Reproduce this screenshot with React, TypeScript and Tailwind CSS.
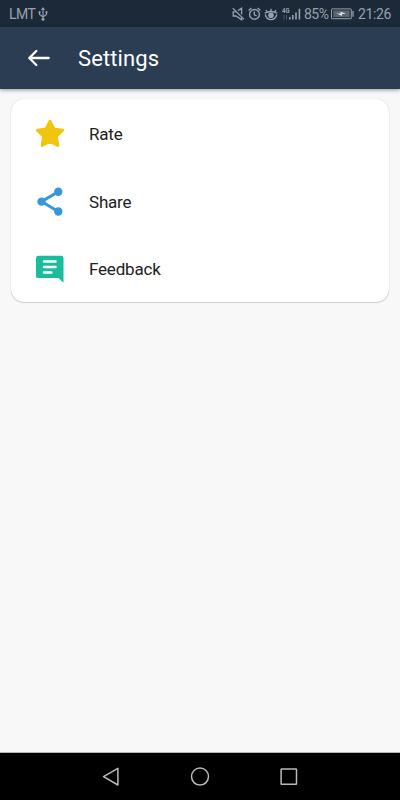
import type { ReactNode } from "react"

interface SettingsItem {
  label: string
  icon: ReactNode
}

function StarIcon() {
  return (
    <svg width="30" height="30" viewBox="0 0 30 30" fill="#f1c40f" stroke="#f1c40f" strokeWidth="3" strokeLinejoin="round">
      <path d="M15 2.2 L18.9 10 L27.6 11.3 L21.3 17.5 L22.8 26.4 L15 22.5 L7.2 26.4 L8.7 17.5 L2.4 11.3 L11.1 10 Z" />
    </svg>
  )
}

function ShareIcon() {
  return (
    <svg width="30" height="30" viewBox="0 0 30 30" fill="#3498db">
      <path d="M23.3 4.8 L6.5 14.6 L23.3 24.5" fill="none" stroke="#3498db" strokeWidth="3" />
      <circle cx="23.3" cy="4.8" r="4.2" />
      <circle cx="6.5" cy="14.6" r="4.2" />
      <circle cx="23.3" cy="24.5" r="4.2" />
    </svg>
  )
}

function FeedbackIcon() {
  return (
    <svg width="30" height="30" viewBox="0 0 30 30">
      <path d="M3.2 1.8 H26.3 A2.2 2.2 0 0 1 28.5 4 V28.8 L23.5 24.1 H3.2 A2.2 2.2 0 0 1 1 21.9 V4 A2.2 2.2 0 0 1 3.2 1.8 Z" fill="#1abc9c" />
      <path d="M9 7.5 H20.5 M9 13 H20.5 M9 18.4 H16.4" stroke="#fff" strokeWidth="2.5" strokeLinecap="round" />
    </svg>
  )
}

const items: SettingsItem[] = [
  { label: "Rate", icon: <StarIcon /> },
  { label: "Share", icon: <ShareIcon /> },
  { label: "Feedback", icon: <FeedbackIcon /> },
]

function UsbIcon() {
  return (
    <svg className="ml-[3px]" width="10" height="14" viewBox="0 0 10 14" fill="none" stroke="currentColor">
      <path d="M5 2 V12 M1.5 5.5 V7.5 L5 10 L8.5 7.5 V5.5" strokeWidth="1.1" />
      <path d="M5 0 L7 3 H3 Z M0.5 4.2 H2.5 V6.2 H0.5 Z" fill="currentColor" stroke="none" />
      <circle cx="8.5" cy="5.2" r="1.1" fill="currentColor" stroke="none" />
      <circle cx="5" cy="12.2" r="1.5" fill="currentColor" stroke="none" />
    </svg>
  )
}

function MuteIcon() {
  return (
    <svg width="13" height="14" viewBox="0 0 13 14" fill="none" stroke="currentColor" strokeWidth="1.3">
      <path d="M0.8 1.2 L12 12.4" />
      <path d="M6 3.6 L9.6 1.2 V7.4 M3.8 4.9 H1.2 V9 H4 L9.6 12.8 V10.5" />
    </svg>
  )
}

function AlarmIcon() {
  return (
    <svg className="ml-[3px]" width="13" height="14" viewBox="0 0 13 14" fill="none" stroke="currentColor" strokeWidth="1.4">
      <circle cx="6.5" cy="7.4" r="4.9" />
      <path d="M6.3 4.6 V7.8 L8.6 8.8 M0.6 3.4 L3.4 0.9 M12.4 3.4 L9.6 0.9" />
    </svg>
  )
}

function EyeIcon() {
  return (
    <svg className="ml-[3px]" width="14" height="14" viewBox="0 0 14 14" fill="none" stroke="currentColor" strokeWidth="1.3">
      <path d="M0.6 6.2 Q7 2.8 13.4 6.2 M1.2 7.5 Q2.5 12.6 7 12.6 Q11.5 12.6 12.8 7.5" />
      <path d="M7 4.5 V1.8 M3.4 5.2 L2 3 M10.6 5.2 L12 3" />
      <circle cx="7" cy="8.2" r="2.8" fill="currentColor" stroke="none" />
    </svg>
  )
}

function SignalIcon() {
  return (
    <svg className="ml-1" width="20" height="14" viewBox="0 0 20 14" fill="currentColor">
      <text x="0" y="6" fontSize="7" fontWeight="700" textLength="7.5" lengthAdjust="spacingAndGlyphs" className="font-['Roboto',sans-serif]">4G</text>
      <path d="M1.5 8 H2.5 V12.5 H1.5 Z M4 8 H5 V12.5 H4 Z" opacity="0.4" />
      <path d="M7 10 H8.6 V12.5 H7 Z M10 8 H11.6 V12.5 H10 Z M13.2 5.5 H14.8 V12.5 H13.2 Z" />
      <path d="M16.6 1.8 H18.2 V12.5 H16.6 Z" />
    </svg>
  )
}

function BatteryIcon() {
  return (
    <svg className="ml-[3px]" width="24" height="12" viewBox="0 0 24 12">
      <rect x="0.5" y="0.9" width="19.8" height="9.8" rx="0.6" fill="none" stroke="currentColor" strokeWidth="1" />
      <rect x="2.2" y="2.4" width="16.4" height="6.8" fill="currentColor" opacity="0.5" />
      <path d="M5.5 5.4 H9.6 V3.6 L15 6 H11 V8 Z" fill="#dde3e8" />
      <path d="M22 3 V8.8" stroke="currentColor" strokeWidth="1.3" />
    </svg>
  )
}

function StatusBar() {
  return (
    <div className="h-[27px] shrink-0 flex items-center px-[9px] bg-[#1c2938] text-[#98a2ae] text-[14px] leading-none">
      <span className="w-[26px] tracking-[-0.5px]">LMT</span>
      <UsbIcon />
      <div className="ml-auto flex items-center">
        <MuteIcon />
        <AlarmIcon />
        <EyeIcon />
        <SignalIcon />
        <span className="ml-0.5 w-6 tracking-[-0.5px]">85%</span>
        <BatteryIcon />
        <span className="ml-[3px] w-[33px] tracking-[-0.4px]">21:26</span>
      </div>
    </div>
  )
}

function NavigationBar() {
  return (
    <nav className="h-12 shrink-0 flex items-center justify-center gap-[65px] bg-black border-t border-[#b5b5b5]">
      <svg width="24" height="24" viewBox="0 0 24 24" fill="none" stroke="#b9b9b9" strokeWidth="1.5" strokeLinejoin="round">
        <path d="M18.9 3.4 V20 L4.5 11.7 Z" />
      </svg>
      <svg width="24" height="24" viewBox="0 0 24 24" fill="none" stroke="#b9b9b9" strokeWidth="1.5">
        <circle cx="12" cy="11.6" r="8.5" />
      </svg>
      <svg width="24" height="24" viewBox="0 0 24 24" fill="none" stroke="#b9b9b9" strokeWidth="1.5">
        <rect x="4.1" y="3.9" width="15.4" height="15.4" rx="0.5" />
      </svg>
    </nav>
  )
}

export default function App() {
  return (
    <div className="h-screen flex flex-col bg-[#f8f8f8] font-['Roboto',sans-serif]">
      <StatusBar />

      {/* App bar */}
      <header className="h-[62px] shrink-0 flex items-center pl-[27px] bg-[#2a3d52] text-white shadow-[0_1px_4px_rgba(0,0,0,0.4)]">
        <button aria-label="Back">
          <svg width="24" height="20" viewBox="0 0 24 20" fill="none" stroke="currentColor" strokeWidth="2.3" strokeLinecap="round" strokeLinejoin="round">
            <path d="M21.7 10 H2.5 M9.3 3 L2.3 10 L9.3 17" />
          </svg>
        </button>
        <h1 className="ml-[27px] pt-0.5 text-[22px] leading-7 tracking-[0.1px]">Settings</h1>
      </header>

      <main className="flex-1 px-[11px] pt-[10px]">
        <ul className="rounded-[13px] bg-white shadow-[0_0_1px_rgba(0,0,0,0.25),0_1px_1px_rgba(0,0,0,0.15)]">
          {items.map((item) => (
            <li key={item.label} className="h-[67.7px] flex items-center pl-6 pt-0.5">
              {item.icon}
              <span className="ml-6 pt-[1.5px] text-[17px] tracking-[-0.2px] text-[#212121]">{item.label}</span>
            </li>
          ))}
        </ul>
      </main>

      <NavigationBar />
    </div>
  )
}
